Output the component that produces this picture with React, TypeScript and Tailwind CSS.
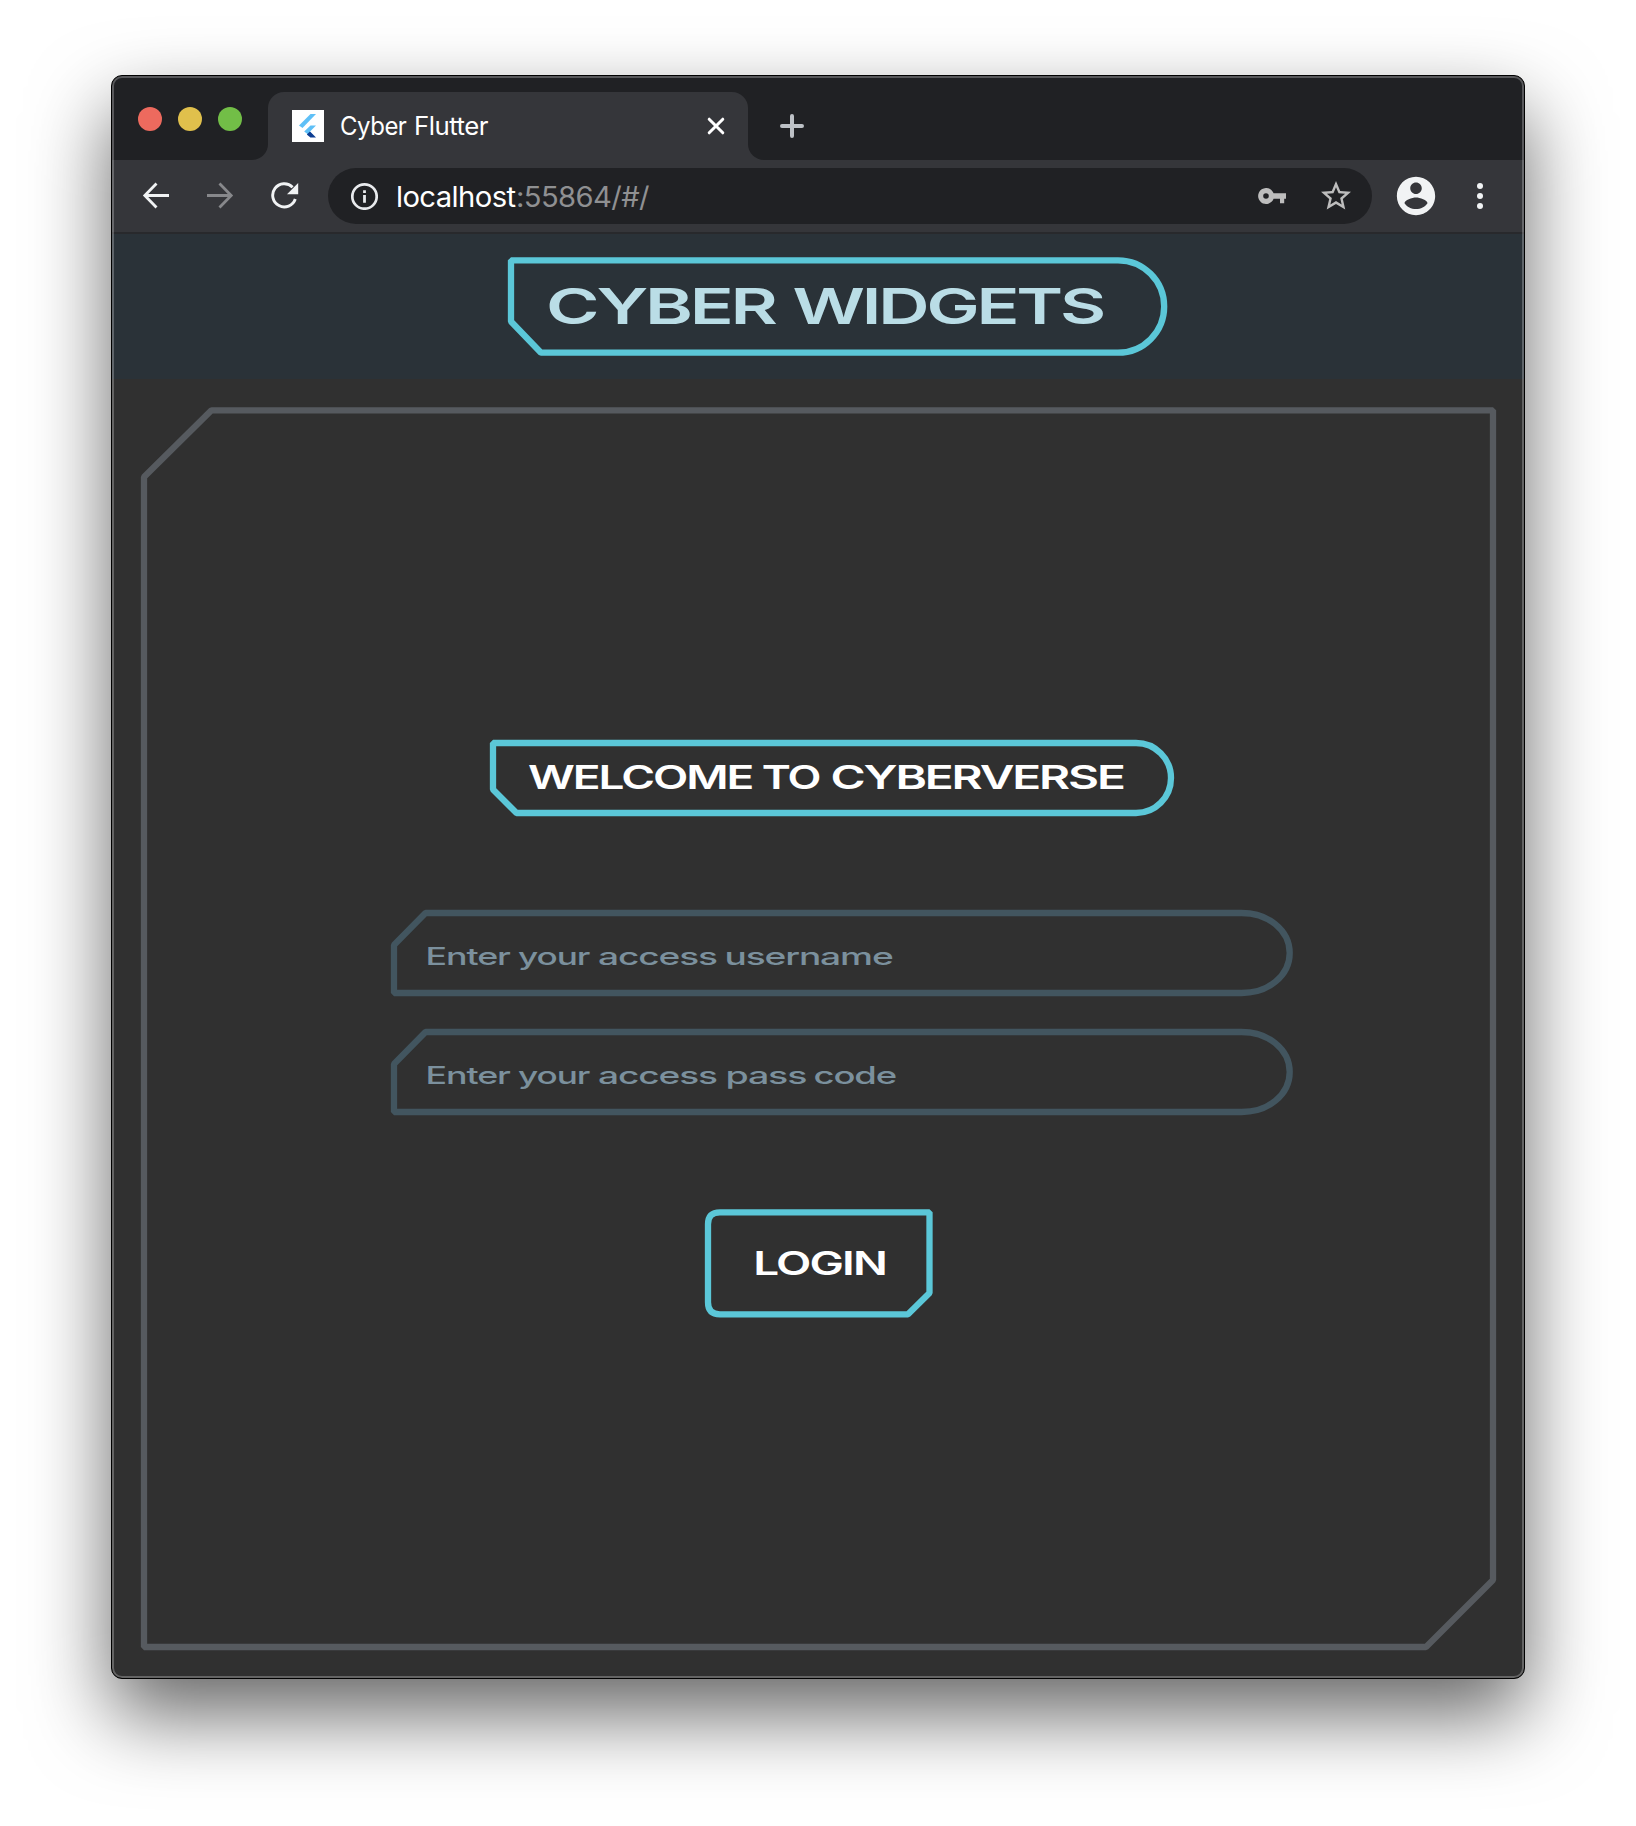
import { ReactNode, useLayoutEffect, useRef, useState } from "react";

type WordSpec = { text: string; width: number; gap?: number; className?: string };

/* A word stretched horizontally so that its ink fills the given width. */
function Word({ text, width, gap = 0, className = "" }: WordSpec) {
  const ref = useRef<HTMLSpanElement>(null);
  const [fit, setFit] = useState({ scale: 1, shift: 0 });

  useLayoutEffect(() => {
    const el = ref.current;
    const ctx = document.createElement("canvas").getContext("2d");
    if (!el || !ctx) return;
    const cs = getComputedStyle(el);
    ctx.font = `${cs.fontWeight} ${cs.fontSize} ${cs.fontFamily}`;
    const tracking = parseFloat(cs.letterSpacing) || 0;
    const m = ctx.measureText(text);
    const ink = m.actualBoundingBoxRight + m.actualBoundingBoxLeft + tracking * (text.length - 1);
    const scale = width / ink;
    setFit({ scale, shift: m.actualBoundingBoxLeft * scale });
  }, [text, width]);

  return (
    <span className="block shrink-0" style={{ width, marginLeft: gap }}>
      <span
        ref={ref}
        className={`inline-block origin-left whitespace-nowrap ${className}`}
        style={{ transform: `translateX(${fit.shift}px) scaleX(${fit.scale})` }}
      >
        {text}
      </span>
    </span>
  );
}

function Words({ words, className = "" }: { words: WordSpec[]; className?: string }) {
  return (
    <span className={`flex ${className}`}>
      {words.map((w) => (
        <Word key={w.text} {...w} />
      ))}
    </span>
  );
}

/* A box whose outline is a drawn path; children sit inside it. */
function Outlined({
  w,
  h,
  d,
  color,
  className = "",
  children,
}: {
  w: number;
  h: number;
  d: string;
  color: string;
  className?: string;
  children?: ReactNode;
}) {
  return (
    <div className={`relative shrink-0 ${className}`} style={{ width: w, height: h }}>
      <svg
        className={`pointer-events-none absolute inset-0 overflow-visible ${color}`}
        width={w}
        height={h}
        viewBox={`0 0 ${w} ${h}`}
        fill="none"
        stroke="currentColor"
        strokeWidth="6.3"
        strokeLinejoin="bevel"
      >
        <path d={d} />
      </svg>
      {children}
    </div>
  );
}

function Favicon() {
  return (
    <svg width="32" height="32" viewBox="0 0 32 32" className="shrink-0 bg-white">
      <path d="M18.5 4H24L10.5 18 7 15.5z" fill="#5fc0f7" />
      <path d="M18.5 15.5H24L17.8 21.7 21 25 18 26 12.2 21.5z" fill="#5fc0f7" />
      <path d="M14.8 24.5 18 21.6 24 27.5H18.4z" fill="#0d3d92" />
    </svg>
  );
}

function TabStrip() {
  return (
    <div className="flex h-[84px] bg-[#202124]">
      <div className="flex gap-4 pt-[31px] pl-[26px]">
        <span className="size-6 rounded-full bg-[#ed6a5e]" />
        <span className="size-6 rounded-full bg-[#e0c04c]" />
        <span className="size-6 rounded-full bg-[#72be47]" />
      </div>
      <div className="mt-auto ml-[10px] size-4 bg-[#35363a]">
        <div className="size-4 rounded-br-2xl bg-[#202124]" />
      </div>
      <div className="mt-4 flex h-[68px] w-[480px] items-center rounded-t-2xl bg-[#35363a] pl-6">
        <Favicon />
        <Words
          className="ml-[17px] text-[25px] leading-8 tracking-[-0.02em] text-white"
          words={[
            { text: "Cyber", width: 65.5 },
            { text: "Flutter", width: 72, gap: 9 },
          ]}
        />
        <svg className="ml-[219px]" width="18" height="18" viewBox="0 0 18 18" stroke="#fff" strokeWidth="3" strokeLinecap="round">
          <path d="M2.2 2.2 15.8 15.8M15.8 2.2 2.2 15.8" />
        </svg>
      </div>
      <div className="mt-auto size-4 bg-[#35363a]">
        <div className="size-4 rounded-bl-2xl bg-[#202124]" />
      </div>
      <svg className="mt-[38px] ml-4" width="24" height="24" viewBox="0 0 24 24" stroke="#bdc1c6" strokeWidth="4" strokeLinecap="round">
        <path d="M2 12H22M12 2V22" />
      </svg>
    </div>
  );
}

function Toolbar() {
  return (
    <div className="flex h-[74px] items-center border-b-2 border-[#28292c] bg-[#35363a]">
      <svg className="ml-[30px]" width="28" height="28" viewBox="0 0 28 28" fill="none" stroke="#f1f3f4" strokeWidth="2.8">
        <path d="M27 13.5H3M14.5 1.5 2.8 13.5 14.5 25.5" />
      </svg>
      <svg className="ml-9" width="28" height="28" viewBox="0 0 28 28" fill="none" stroke="#87888b" strokeWidth="2.8">
        <path d="M1 13.5H25M13.5 1.5 25.2 13.5 13.5 25.5" />
      </svg>
      <svg className="ml-9" width="30" height="28" viewBox="0 0 30 28" fill="none">
        <path d="M22.6 5.2A11.6 11.6 0 1 0 25.3 17" stroke="#f1f3f4" strokeWidth="2.9" />
        <path d="M28.2 1V12.2H17z" fill="#f1f3f4" />
      </svg>
      <div className="ml-[28px] flex h-14 w-[1044px] items-center rounded-full bg-[#202124] pl-[22px]">
        <svg width="28" height="28" viewBox="0 0 28 28" fill="none">
          <circle cx="14.5" cy="14.5" r="12.2" stroke="#e8eaed" strokeWidth="2.7" />
          <path d="M14.5 13V20.7M14.5 8.2V11" stroke="#e8eaed" strokeWidth="2.8" />
        </svg>
        <Words
          className="ml-[19.5px] pt-px text-[28px] leading-10 tracking-[-0.02em] text-white"
          words={[
            { text: "localhost", width: 118 },
            { text: ":55864/#/", width: 131.5, gap: 2.5, className: "text-[#8f9092]" },
          ]}
        />
        <svg className="ml-auto" width="28" height="16" viewBox="0 0 28 16" fill="#bdbdbd" fillRule="evenodd">
          <path d="M15.6 5.2A8 8 0 1 0 15.6 10.8H22V15.3H26.2V10.8H28V5.2zM8 5.2A2.8 2.8 0 1 1 8 10.8 2.8 2.8 0 0 1 8 5.2z" />
        </svg>
        <svg className="mr-[18px] ml-[32px]" width="36" height="36" viewBox="0 0 24 24" fill="#bdbdbd">
          <path d="M22 9.24l-7.19-.62L12 2 9.19 8.63 2 9.24l5.46 4.73L5.82 21 12 17.27 18.18 21l-1.63-7.03L22 9.24zM12 15.4l-3.76 2.27 1-4.28-3.32-2.88 4.38-.38L12 6.1l1.71 4.04 4.38.38-3.32 2.88 1 4.28L12 15.4z" />
        </svg>
      </div>
      <svg className="ml-[21px]" width="46" height="46" viewBox="0 0 24 24" fill="#f1f3f4">
        <path d="M12 2C6.48 2 2 6.48 2 12s4.48 10 10 10 10-4.48 10-10S17.52 2 12 2zm0 3c1.66 0 3 1.34 3 3s-1.34 3-3 3-3-1.34-3-3 1.34-3 3-3zm0 13.8c-2.5 0-4.71-1.1-6-3.02.03-1.7 4-2.98 6-2.98s5.97 1.28 6 2.98c-1.29 1.92-3.5 3.02-6 3.02z" />
      </svg>
      <div className="ml-[38px] flex flex-col gap-[4px]">
        <span className="size-[6px] rounded-full bg-[#f1f3f4]" />
        <span className="size-[6px] rounded-full bg-[#f1f3f4]" />
        <span className="size-[6px] rounded-full bg-[#f1f3f4]" />
      </div>
    </div>
  );
}

function AccessField({ words, className = "" }: { words: WordSpec[]; className?: string }) {
  return (
    <Outlined
      w={902}
      h={86}
      color="text-[#42555f]"
      d="M34.5 3H850.5C877 3 898.7 20 898.7 43S877 83 850.5 83H3V35z"
      className={`ml-[250px] flex items-center pt-[8px] pl-[35.5px] ${className}`}
    >
      <Words
        className="text-[24px] leading-8 font-medium tracking-[-0.03em] text-[#7b909d]"
        words={words}
      />
    </Outlined>
  );
}

export default function App() {
  return (
    <main className="h-[1826px] w-[1636px] overflow-hidden bg-white pt-[75px] pl-[111px] font-['Inter',sans-serif]">
      <div className="relative flex h-[1604px] w-[1414px] flex-col overflow-hidden rounded-[11px] border border-black bg-[#303030] shadow-[0_36px_80px_rgba(0,0,0,0.6)]">
        <TabStrip />
        <Toolbar />

        <header className="h-[145px] shrink-0 bg-[#2a3238] pt-[23px] pl-[396px]">
          <Outlined
            w={660}
            h={99}
            color="text-[#5bc7d8]"
            d="M3 3.3H610A46.2 46.2 0 0 1 610 95.7H33L3 64.5z"
            className="flex items-center pb-px pl-[40.5px]"
          >
            <Words
              className="text-[50px] leading-[60px] font-semibold tracking-[-0.045em] text-[#badde6]"
              words={[
                { text: "CYBER", width: 228 },
                { text: "WIDGETS", width: 310, gap: 17.5 },
              ]}
            />
          </Outlined>
        </header>

        <Outlined
          w={1355}
          h={1243}
          color="text-[#565a5f]"
          d="M70.5 3.3H1352V1173L1285 1240H3V70z"
          className="mt-[28px] ml-[29px] flex flex-col pt-[332.5px]"
        >
          <Outlined
            w={685}
            h={77}
            color="text-[#5bc7d8]"
            d="M3 3H646A35 35 0 0 1 646 73H26.5L3 49.5z"
            className="ml-[349px] flex items-center pb-[3px] pl-[38px]"
          >
            <Words
              className="text-[33px] leading-10 font-semibold tracking-[-0.045em] text-white"
              words={[
                { text: "WELCOME", width: 225 },
                { text: "TO", width: 56.5, gap: 10 },
                { text: "CYBERVERSE", width: 292.5, gap: 12.5 },
              ]}
            />
          </Outlined>

          <AccessField
            className="mt-[93.5px]"
            words={[
              { text: "Enter", width: 83.5 },
              { text: "your", width: 72, gap: 8 },
              { text: "access", width: 118.5, gap: 8 },
              { text: "username", width: 166, gap: 9.5 },
            ]}
          />
          <AccessField
            className="mt-[33px]"
            words={[
              { text: "Enter", width: 83.5 },
              { text: "your", width: 72, gap: 8 },
              { text: "access", width: 118.5, gap: 8 },
              { text: "pass", width: 79, gap: 10 },
              { text: "code", width: 80.5, gap: 9 },
            ]}
          />

          <Outlined
            w={228}
            h={109}
            color="text-[#5bc7d8]"
            d="M15 3.3H224.5V84L203 105.3H15Q3 105.3 3 93.3V15.3Q3 3.3 15 3.3z"
            className="mt-[94px] ml-[564px] flex items-center pb-[2px] pl-[50.5px]"
          >
            <Words
              className="text-[33px] leading-10 font-semibold tracking-[-0.04em] text-white"
              words={[{ text: "LOGIN", width: 129 }]}
            />
          </Outlined>
        </Outlined>

        <div className="pointer-events-none absolute inset-0 rounded-[10px] border-2 border-white/25" />
      </div>
    </main>
  );
}
